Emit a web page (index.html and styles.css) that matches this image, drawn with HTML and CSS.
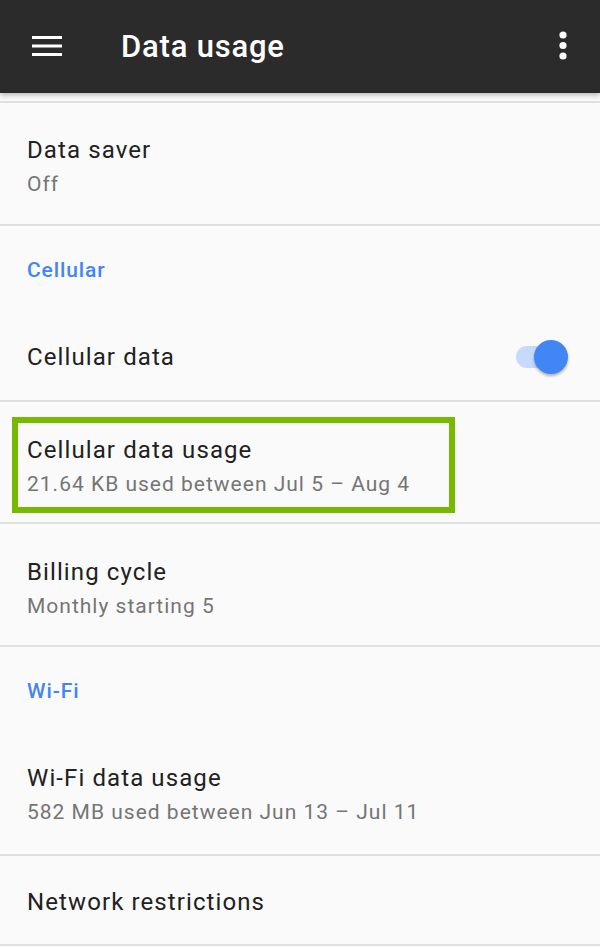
FILE: index.html
```html
<!DOCTYPE html>
<html>
<head>
<meta charset="utf-8">
<link rel="stylesheet" href="styles.css">
</head>
<body>
<div class="screen">
  <header class="appbar">
    <svg class="menu-icon" width="30" height="22" viewBox="0 0 30 22">
      <rect x="0" y="1" width="30" height="3" fill="#fff"/>
      <rect x="0" y="9.5" width="30" height="3" fill="#fff"/>
      <rect x="0" y="18" width="30" height="3" fill="#fff"/>
    </svg>
    <h1 class="title">Data usage</h1>
    <svg class="more-icon" width="8" height="30" viewBox="0 0 8 30">
      <circle cx="4" cy="4" r="3.6" fill="#fff"/>
      <circle cx="4" cy="14.5" r="3.6" fill="#fff"/>
      <circle cx="4" cy="25" r="3.6" fill="#fff"/>
    </svg>
  </header>
  <main class="list">
    <div class="top-spacer"></div>
    <div class="pref two divided h121 first">
      <div class="pref-title">Data saver</div>
      <div class="pref-sub">Off</div>
    </div>
    <div class="category">Cellular</div>
    <div class="pref one divided switch-row">
      <div class="pref-title">Cellular data</div>
      <div class="switch"><span class="track"></span><span class="thumb"></span></div>
    </div>
    <div class="pref two divided highlighted">
      <div class="pref-title">Cellular data usage</div>
      <div class="pref-sub">21.64 KB used between Jul 5 – Aug 4</div>
      <div class="highlight-box"></div>
    </div>
    <div class="pref two divided h121">
      <div class="pref-title">Billing cycle</div>
      <div class="pref-sub">Monthly starting 5</div>
    </div>
    <div class="category">Wi-Fi</div>
    <div class="pref two divided flat">
      <div class="pref-title">Wi-Fi data usage</div>
      <div class="pref-sub">582 MB used between Jun 13 – Jul 11</div>
    </div>
    <div class="pref one divided last">
      <div class="pref-title">Network restrictions</div>
    </div>
  </main>
</div>
</body>
</html>
```

FILE: styles.css
```css
html, body {
  margin: 0;
  padding: 0;
  background: #fafafa;
}
body {
  font-family: Roboto, "Noto Sans", "Liberation Sans", sans-serif;
  width: 600px;
  height: 947px;
  overflow: hidden;
}
.screen {
  position: relative;
  width: 600px;
  height: 947px;
  background: #fafafa;
}
.appbar {
  position: relative;
  z-index: 2;
  height: 93px;
  background: #2b2b2b;
  display: flex;
  align-items: center;
  box-shadow: 0 2px 5px rgba(0,0,0,0.28);
}
.menu-icon {
  margin-left: 32px;
  margin-top: -1px;
  flex: none;
}
.title {
  margin: 0 0 0 59px;
  font-size: 31px;
  font-weight: 500;
  color: #ffffff;
  flex: 1;
  letter-spacing: 0.8px;
}
.more-icon {
  margin-right: 33px;
  margin-top: -1px;
  flex: none;
}
.list {
  display: flex;
  flex-direction: column;
}
.top-spacer {
  height: 8px;
  border-bottom: 2px solid #e0e0e0;
}
.pref {
  position: relative;
  display: flex;
  flex-direction: column;
  justify-content: center;
  padding: 0 27px;
  box-sizing: content-box;
}
.divided {
  border-bottom: 2px solid #e0e0e0;
}
.pref.two {
  height: 120px;
}
.pref.two.h121 {
  height: 121px;
}
.pref.two .pref-title {
  margin-top: 9px;
}
.pref.two.first .pref-title {
  margin-top: 7px;
}
.pref.two.flat {
  height: 119px;
}
.pref.two.flat .pref-title {
  margin-top: 0;
}
.pref.one {
  height: 86px;
}
.pref.one.last {
  height: 84px;
  padding-top: 4px;
}
.pref-title {
  font-size: 24px;
  line-height: 34px;
  letter-spacing: 1.1px;
  color: #212121;
}
.pref-sub {
  font-size: 21px;
  line-height: 34px;
  letter-spacing: 1px;
  color: #757575;
}
.category {
  height: 88px;
  display: flex;
  align-items: center;
  padding: 0 27px;
  font-size: 21px;
  font-weight: 500;
  letter-spacing: 0.9px;
  color: #4285f4;
}
.switch-row {
  flex-direction: row;
  align-items: center;
  justify-content: space-between;
}
.switch {
  position: relative;
  width: 56px;
  height: 36px;
  margin-right: 1px;
}
.track {
  position: absolute;
  left: 0;
  top: 7px;
  width: 46px;
  height: 22px;
  border-radius: 11px;
  background: #c6dafc;
}
.thumb {
  position: absolute;
  right: 4px;
  top: 1px;
  width: 34px;
  height: 34px;
  border-radius: 50%;
  background: #4285f4;
  box-shadow: 0 2px 3px rgba(0,0,0,0.3);
}
.highlight-box {
  position: absolute;
  left: 12px;
  top: 15px;
  width: 443px;
  height: 96px;
  box-sizing: border-box;
  border: 6px solid #76b900;
  pointer-events: none;
}
```
